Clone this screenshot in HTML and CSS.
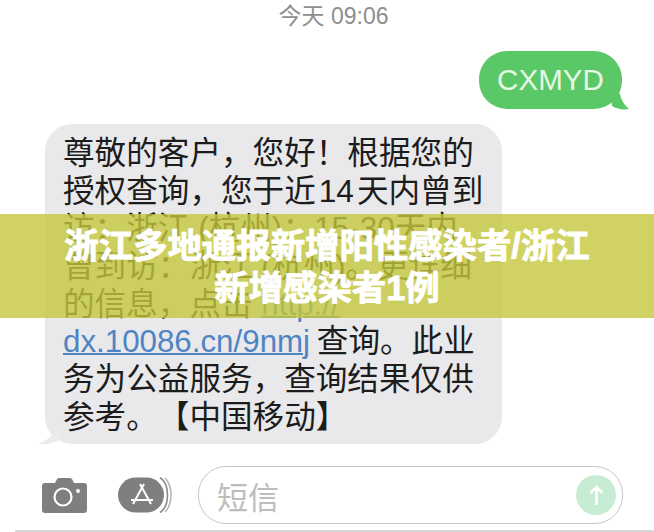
FILE: index.html
```html
<!DOCTYPE html>
<html lang="zh-CN">
<head>
    <meta charset="UTF-8">
    <meta name="viewport" content="width=device-width, initial-scale=1.0">
    <title>浙江多地通报新增阳性感染者</title>
    <link rel="stylesheet" href="styles.css">
</head>
<body>
    <div class="screen">
        <div class="time">今天 09:06</div>
        <div class="sent-row">
            <div class="sent">CXMYD
                <svg class="sent-tail" width="20" height="18" viewBox="0 0 20 18"><path d="M0 0 L9 2 C10 8 13 13 18 17 C12 18 6 17 1 14 Z" fill="#5ac866"/></svg>
            </div>
        </div>
        <div class="received">
            <p class="line">尊敬的客户，您好！根据您的</p>
            <p class="line">授权查询，您于近<span class="num">14</span>天内曾到</p>
            <p class="line">访：浙江 (杭州)：15-30天内</p>
            <p class="line">曾到访：浙江 (杭州)。更详细</p>
            <p class="line">的信息，点击 <span class="link">http://</span></p>
            <p class="line"><span class="link">dx.10086.cn/9nmj</span> 查询。此业</p>
            <p class="line">务为公益服务，查询结果仅供</p>
            <p class="line">参考。【中国移动】</p>
            <svg class="received-tail" width="24" height="20" viewBox="0 0 24 20"><path d="M20 0 C19 7 12 14 0 19 C8 20 16 18 24 14 Z" fill="#ebebed"/></svg>
        </div>
        <div class="composer">
            <svg class="camera" width="45" height="35" viewBox="0 0 45 35">
                <path d="M3 5 H13 L15 1 Q16 0 18 0 H27 Q29 0 30 1 L32 5 H42 Q45 5 45 8 V32 Q45 35 42 35 H3 Q0 35 0 32 V8 Q0 5 3 5 Z" fill="#7f7f7f"/>
                <circle cx="21" cy="19" r="8.5" fill="none" stroke="#fff" stroke-width="2.2"/>
                <circle cx="36" cy="13" r="2" fill="#fff"/>
            </svg>
            <svg class="apps" width="55" height="36" viewBox="0 0 55 36">
                <path d="M47 1 C55 9 55 27 47 35" fill="none" stroke="#b5b5b5" stroke-width="1.6"/>
                <path d="M42 0.5 C52 7 52 29 42 35.5" fill="none" stroke="#8a8a8a" stroke-width="1.6"/>
                <rect x="0" y="0.5" width="46" height="35" rx="17.5" fill="#7f7f7f"/>
                <path d="M22 7 L33 27 M26 7 L15 27 M13 23 H35" fill="none" stroke="#fff" stroke-width="2"/>
            </svg>
            <div class="input">
                <span class="placeholder">短信</span>
                <span class="send">
                    <svg width="15" height="21" viewBox="0 0 15 21"><path d="M7.5 20 V2 M1.5 8 L7.5 2 L13.5 8" fill="none" stroke="#fff" stroke-width="2.6"/></svg>
                </span>
            </div>
        </div>
        <div class="bottom-line"></div>
        <div class="banner">
            <h1 class="title">浙江多地通报新增阳性感染者/浙江<br>新增感染者1例</h1>
        </div>
    </div>
</body>
</html>
```

FILE: styles.css
```css
* {
    box-sizing: border-box;
}
body {
    margin: 0;
    background-color: #fff;
    font-family: "Liberation Sans", "Noto Sans CJK SC", sans-serif;
    text-spacing-trim: space-all;
}
.screen {
    position: relative;
    width: 654px;
    height: 532px;
    overflow: hidden;
    padding-top: 1px;
}
.time {
    height: 30px;
    line-height: 30px;
    text-align: center;
    font-size: 23px;
    color: #8e8e8e;
    padding-left: 13px;
}
.sent-row {
    display: flex;
    justify-content: flex-end;
    margin-top: 20px;
    padding-right: 32px;
}
.sent {
    position: relative;
    width: 143px;
    height: 58px;
    line-height: 58px;
    text-align: center;
    font-size: 29.6px;
    color: #e6f7e4;
    background-color: #5ac866;
    border-radius: 28px;
}
.sent-tail {
    position: absolute;
    right: -9px;
    bottom: -1px;
}
.received {
    position: relative;
    width: 457px;
    margin: 15px 0 0 45px;
    height: 320px;
    padding: 11px 0 0 18px;
    background-color: #e9e9eb;
    border-radius: 27px;
}
.line {
    margin: 0;
    height: 37.7px;
    line-height: 37.7px;
    font-size: 31.6px;
    color: #1c1c1c;
    white-space: nowrap;
}
.num {
    margin: 0 3px;
}
.link {
    font-size: 31.3px;
    margin-right: -2px;
    color: #4f84c4;
    text-decoration: underline;
    text-decoration-thickness: 1.5px;
}
.received-tail {
    position: absolute;
    left: -7px;
    bottom: -1px;
}
.composer {
    display: flex;
    align-items: center;
    margin-top: 22px;
    padding-left: 42px;
}
.apps {
    margin-left: 31px;
}
.input {
    display: flex;
    align-items: center;
    justify-content: space-between;
    width: 425px;
    height: 58px;
    margin-left: 25px;
    padding: 0 6px 0 18px;
    border: 1.5px solid #c6c6c6;
    border-radius: 28px;
}
.placeholder {
    font-size: 31px;
    color: #bdbdbd;
}
.send {
    display: flex;
    align-items: center;
    justify-content: center;
    width: 40px;
    height: 40px;
    border-radius: 50%;
    background-color: #c7ecd4;
}
.bottom-line {
    height: 2px;
    margin: 6px 0 0 15px;
    background-color: #d8d8d8;
}
.banner {
    position: absolute;
    left: 0;
    top: 214px;
    width: 654px;
    height: 104px;
    padding-top: 11px;
    background-color: rgba(196, 200, 60, 0.8);
}
.title {
    margin: 0;
    text-align: center;
    font-size: 34.4px;
    line-height: 42px;
    font-weight: 700;
    color: #fff;
    -webkit-text-stroke: 0.9px #fff;
}
```
